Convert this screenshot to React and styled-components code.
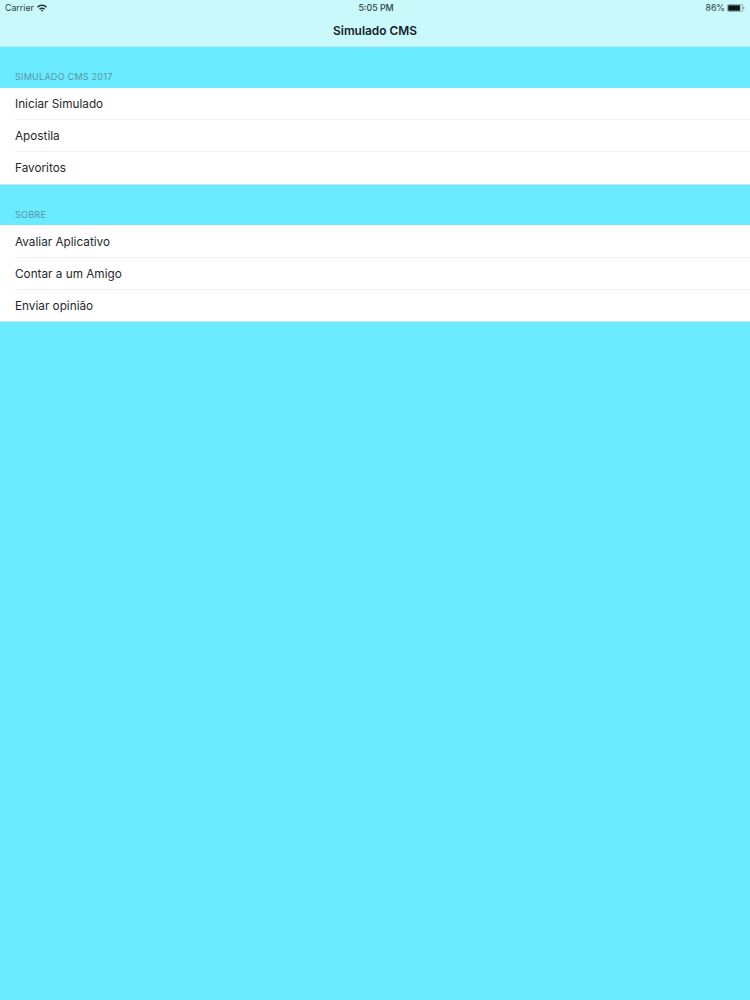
import React from "react";
import styled, { createGlobalStyle } from "styled-components";

const GlobalStyle = createGlobalStyle`
  html, body {
    margin: 0;
    padding: 0;
    background: #6aebff;
  }
  * {
    box-sizing: border-box;
  }
`;

const Page = styled.div`
  width: 750px;
  height: 1000px;
  overflow: hidden;
  background: #6aebff;
  font-family: "Inter", "Liberation Sans", sans-serif;
  color: #1c2225;
`;

const Header = styled.header`
  height: 47px;
  background: #c9f9fb;
  border-bottom: 1px solid #b4e8ee;
`;

const StatusBar = styled.div`
  height: 15px;
  padding: 0 5px;
  display: grid;
  grid-template-columns: 1fr auto 1fr;
  align-items: center;
  font-size: 8.8px;
  color: #2c4146;
`;

const StatusLeft = styled.div`
  display: flex;
  align-items: center;
  gap: 3.5px;
`;

const StatusTime = styled.div`
  font-weight: 500;
  padding-left: 2px;
`;

const StatusRight = styled.div`
  display: flex;
  align-items: center;
  justify-content: flex-end;
  gap: 2px;
`;

const NavTitle = styled.div`
  height: 31px;
  display: flex;
  align-items: center;
  justify-content: center;
  font-size: 11.9px;
  font-weight: 600;
  color: #14212a;
`;

const Section = styled.section`
  display: flex;
  flex-direction: column;
`;

const SectionTitle = styled.div`
  height: ${(p) => p.$height}px;
  padding: 0 15px ${(p) => p.$bottom}px;
  display: flex;
  align-items: flex-end;
  font-size: 9.1px;
  letter-spacing: 0.2px;
  color: #5a95a5;
  text-transform: uppercase;
`;

const List = styled.ul`
  margin: 0;
  padding: ${(p) => p.$top}px 0 0;
  list-style: none;
  background: #fff;
  border-bottom: 1px solid #c5e6ea;
`;

const Row = styled.li`
  height: 32px;
  padding-left: 15px;
  display: flex;
  align-items: center;
  font-size: 11.75px;
  color: #24282a;

  &:last-child {
    height: ${(p) => 32 - p.$trim}px;
  }

  & + & {
    position: relative;
  }

  & + &::before {
    content: "";
    position: absolute;
    top: -1px;
    left: 15px;
    right: 0;
    height: 1px;
    background: #efeff0;
  }
`;

const WifiIcon = () => (
  <svg width="10" height="8" viewBox="0 0 11 8" fill="#1d3035">
    <path d="M0 2.6C3-.5 8-.5 11 2.6L9.9 3.7C7.4 1.3 3.6 1.3 1.1 3.7Z" />
    <path d="M2.2 4.7C4.1 2.9 6.9 2.9 8.8 4.7L7.7 5.8C6.4 4.7 4.6 4.7 3.3 5.8Z" />
    <path d="M4.2 6.6C4.9 6 6.1 6 6.8 6.6L5.5 8Z" />
  </svg>
);

const BatteryIcon = () => (
  <svg width="18" height="8" viewBox="0 0 18 8">
    <rect x="0.4" y="0.4" width="15.2" height="7.2" rx="1.4" fill="none" stroke="#6f8a8f" strokeWidth="0.7" />
    <rect x="1.2" y="1.2" width="12" height="5.6" rx="0.7" fill="#10171a" />
    <rect x="16.2" y="2.8" width="1" height="2.4" rx="0.5" fill="#8aa4a8" />
  </svg>
);

const sections = [
  {
    title: "Simulado CMS 2017",
    height: 41,
    bottom: 6,
    inset: 0,
    rows: ["Iniciar Simulado", "Apostila", "Favoritos"],
  },
  {
    title: "Sobre",
    height: 40,
    bottom: 5,
    inset: 1,
    rows: ["Avaliar Aplicativo", "Contar a um Amigo", "Enviar opinião"],
  },
];

export default function App() {
  return (
    <>
      <GlobalStyle />
      <Page>
        <Header>
          <StatusBar>
            <StatusLeft>
              Carrier
              <WifiIcon />
            </StatusLeft>
            <StatusTime>5:05 PM</StatusTime>
            <StatusRight>
              86%
              <BatteryIcon />
            </StatusRight>
          </StatusBar>
          <NavTitle>Simulado CMS</NavTitle>
        </Header>
        {sections.map((section) => (
          <Section key={section.title}>
            <SectionTitle $height={section.height} $bottom={section.bottom}>
              {section.title}
            </SectionTitle>
            <List $top={section.inset}>
              {section.rows.map((row) => (
                <Row key={row} $trim={section.inset}>
                  {row}
                </Row>
              ))}
            </List>
          </Section>
        ))}
      </Page>
    </>
  );
}
